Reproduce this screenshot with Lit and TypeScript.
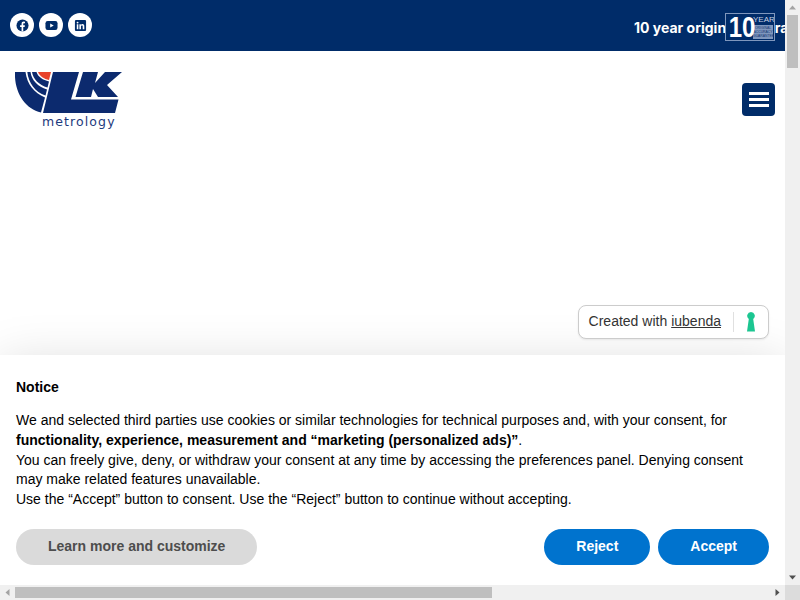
import { LitElement, html, css } from "lit";
import { customElement } from "lit/decorators.js";

@customElement("app-root")
export class AppRoot extends LitElement {
  static styles = css`
    :host {
      display: grid;
      grid-template-columns: 785px 15px;
      grid-template-rows: 585px 15px;
      width: 800px;
      height: 600px;
      overflow: hidden;
      background: #fff;
      font-family: "Liberation Sans", Arial, sans-serif;
    }
    .view {
      position: relative;
      overflow: hidden;
    }

    /* top bar */
    .topbar {
      display: flex;
      align-items: flex-start;
      height: 51px;
      box-sizing: border-box;
      padding: 13px 0 0 10px;
      background: #002c69;
    }
    .social {
      display: flex;
      flex: none;
      gap: 5px;
    }
    .social a {
      display: flex;
      align-items: center;
      justify-content: center;
      width: 24px;
      height: 24px;
      border-radius: 50%;
      background: #fff;
    }
    .social svg {
      display: block;
      width: 13px;
      height: 13px;
    }
    .ticker {
      position: relative;
      flex: none;
      margin: 5px 0 0 542px;
      font-family: Inter, "Liberation Sans", sans-serif;
      font-size: 14px;
      font-weight: 700;
      line-height: 20px;
      color: #fff;
      white-space: nowrap;
    }
    .badge {
      position: absolute;
      left: 91px;
      top: -5px;
      display: flex;
      box-sizing: border-box;
      width: 50px;
      height: 28px;
      border: 1px solid #7f97bd;
      background: #002c69;
      overflow: hidden;
    }
    .badge .num {
      width: 27px;
      font-family: "Liberation Sans", sans-serif;
      font-size: 30px;
      line-height: 26px;
      text-align: center;
      transform: scaleX(0.8);
    }
    .badge .side {
      display: flex;
      flex-direction: column;
      width: 20px;
    }
    .badge .year {
      height: 11px;
      font-family: "Liberation Sans", sans-serif;
      font-size: 8px;
      font-weight: 400;
      line-height: 11px;
      text-align: center;
      color: #c4d0e2;
    }
    .badge .small {
      height: 14px;
      padding-top: 1px;
      box-sizing: border-box;
      background: #7f97bd;
      font-family: "Liberation Sans", sans-serif;
      font-size: 3.4px;
      font-weight: 400;
      line-height: 4.2px;
      text-align: center;
      color: #12336f;
    }

    /* logo row */
    .header {
      display: flex;
      align-items: flex-start;
      justify-content: space-between;
      padding: 20px 10px 0 15px;
    }
    .logo {
      display: flex;
      flex-direction: column;
      width: 108px;
    }
    .logo svg {
      display: block;
    }
    .logo span {
      margin: 0 0 0 27px;
      font-family: "DejaVu Sans", sans-serif;
      font-size: 12.5px;
      line-height: 15px;
      letter-spacing: 1.1px;
      color: #1d3a7d;
      white-space: nowrap;
    }
    .menu {
      display: flex;
      flex-direction: column;
      gap: 3.5px;
      align-items: center;
      justify-content: center;
      width: 33px;
      height: 33px;
      margin-top: 12px;
      border-radius: 4px;
      background: #002c69;
    }
    .menu i {
      display: block;
      width: 20px;
      height: 2.5px;
      background: #fff;
    }

    /* consent notice */
    .notice {
      position: absolute;
      left: 0;
      right: 0;
      bottom: 0;
      box-sizing: border-box;
      height: 230px;
      padding: 23px 16px 20px;
      background: #fff;
      box-shadow: 0 8px 48px rgba(0, 0, 0, 0.15);
      font-size: 14px;
      line-height: 19.6px;
      color: #000;
    }
    .notice h2 {
      margin: 0 0 13.8px;
      font-size: 14px;
      line-height: 19.6px;
      font-weight: 700;
    }
    .notice p {
      margin: 0;
    }
    .actions {
      display: flex;
      gap: 8px;
      margin-top: 20px;
    }
    .actions button {
      height: 36px;
      padding: 0 32px 2px;
      border: 0;
      border-radius: 64px;
      font-family: inherit;
      font-size: 14px;
      font-weight: 700;
      color: #fff;
      background: #0073ce;
    }
    .actions .more {
      margin-right: auto;
      color: #4d4d4d;
      background: #dadada;
    }
    .credit {
      position: absolute;
      right: 16px;
      top: -50px;
      display: flex;
      align-items: center;
      box-sizing: border-box;
      height: 34px;
      padding: 0 12px 0 10px;
      border: 1px solid #ccc;
      border-radius: 8px;
      background: #fff;
      box-shadow: 0 1px 2px rgba(0, 0, 0, 0.08);
      color: #333;
    }
    .credit u {
      margin-left: 4px;
    }
    .credit .rule {
      width: 1px;
      height: 20px;
      margin: 0 12px;
      background: #e0e0e0;
    }
    .credit svg {
      display: block;
    }

    /* scrollbars */
    .sb-v,
    .sb-h {
      display: flex;
      justify-content: space-between;
      background: #f0f0f0;
    }
    .sb-v {
      flex-direction: column;
      align-items: center;
    }
    .sb-h {
      align-items: center;
    }
    .sb-v .thumb {
      width: 11px;
      height: 53px;
      background: #bfbfbf;
      margin-bottom: auto;
    }
    .sb-h .thumb {
      width: 477px;
      height: 11px;
      background: #bfbfbf;
      margin-right: auto;
    }
    .sb-v svg,
    .sb-h svg {
      display: block;
      flex: none;
      width: 15px;
      height: 15px;
    }
    .corner {
      background: #dcdcdc;
    }
  `;

  render() {
    return html`
      <div class="view">
        <div class="topbar">
          <div class="social">
            <a>
              <svg viewBox="0 0 14 14">
                <circle cx="7" cy="7" r="6.5" fill="#002c69" />
                <path d="M6 13.5V8.6H4.4V6.7H6V5.3C6 3.6 7 2.8 8.4 2.8l1.3.1v1.7h-.9c-.8 0-1 .4-1 1v1.1h1.8l-.3 1.9H7.8v4.9z" fill="#fff" />
              </svg>
            </a>
            <a>
              <svg viewBox="0 0 14 14">
                <rect x="0.5" y="2.2" width="13" height="9.6" rx="2.4" fill="#002c69" />
                <path d="M5.6 4.8v4.4L9.4 7z" fill="#fff" />
              </svg>
            </a>
            <a>
              <svg viewBox="0 0 14 14">
                <rect x="1" y="1" width="12" height="12" rx="1.2" fill="#002c69" />
                <path d="M3 5.6h1.7V11H3zM3.85 2.9a1 1 0 1 1 0 2 1 1 0 0 1 0-2zM5.8 5.6h1.6v.75c.3-.5.9-.9 1.7-.9 1.6 0 2 1 2 2.5V11h-1.7V8.2c0-.7-.1-1.3-.9-1.3s-1 .6-1 1.3V11H5.8z" fill="#fff" />
              </svg>
            </a>
          </div>
          <div class="ticker">
            10 year original accuracy guarantee
            <div class="badge">
              <div class="num">10</div>
              <div class="side">
                <div class="year">YEAR</div>
                <div class="small">ORIGINAL<br />ACCURACY<br />GUARANTEE</div>
              </div>
            </div>
          </div>
        </div>

        <div class="header">
          <div class="logo">
            <svg width="108" height="43" viewBox="15 71 108 43">
              <path d="M15 72H25.5C27 84 34 93 45 97.5L41 112.5C25 109 14 92 15 72Z" fill="#0c2a6e" />
              <path d="M27.3 72H30.5C31.5 80 38 87 47 89.5L45.5 95.5C35 92 28.5 83 27.3 72Z" fill="#0c2a6e" />
              <path d="M32 72H36.5C38 77 43 80 49 81.5L47.5 87.5C39 85 33 79 32 72Z" fill="#0c2a6e" />
              <path d="M38 72H51L49 80C44 79 39.5 76 38 72Z" fill="#e8432c" />
              <path d="M53 72H79L71 99.5H118.5L115 113H43Z" fill="#0c2a6e" />
              <path d="M83 72H98L95 83 105 72H122L107 85 118 97H98L93 89 91 97H75.5Z" fill="#0c2a6e" />
            </svg>
            <span>metrology</span>
          </div>
          <div class="menu"><i></i><i></i><i></i></div>
        </div>

        <div class="notice">
          <div class="credit">
            Created with <u>iubenda</u>
            <span class="rule"></span>
            <svg width="10" height="20" viewBox="0 0 10 20">
              <path d="M5 0a3.8 3.8 0 0 1 2.2 6.9L9 19.5H1L2.8 6.9A3.8 3.8 0 0 1 5 0z" fill="#1cc691" />
            </svg>
          </div>
          <h2>Notice</h2>
          <p>
            We and selected third parties use cookies or similar technologies for technical purposes and, with your consent, for
            <b>functionality, experience, measurement and “marketing (personalized ads)”</b>.<br />
            You can freely give, deny, or withdraw your consent at any time by accessing the preferences panel. Denying consent may make related features unavailable.<br />
            Use the “Accept” button to consent. Use the “Reject” button to continue without accepting.
          </p>
          <div class="actions">
            <button class="more">Learn more and customize</button>
            <button>Reject</button>
            <button>Accept</button>
          </div>
        </div>
      </div>

      <div class="sb-v">
        <svg viewBox="0 0 15 15"><path d="M4 9.5 7.5 5.5 11 9.5z" fill="#a3a3a3" /></svg>
        <div class="thumb"></div>
        <svg viewBox="0 0 15 15"><path d="M4 5.5 7.5 9.5 11 5.5z" fill="#505050" /></svg>
      </div>
      <div class="sb-h">
        <svg viewBox="0 0 15 15"><path d="M9.5 4 5.5 7.5 9.5 11z" fill="#a3a3a3" /></svg>
        <div class="thumb"></div>
        <svg viewBox="0 0 15 15"><path d="M5.5 4 9.5 7.5 5.5 11z" fill="#505050" /></svg>
      </div>
      <div class="corner"></div>
    `;
  }
}
